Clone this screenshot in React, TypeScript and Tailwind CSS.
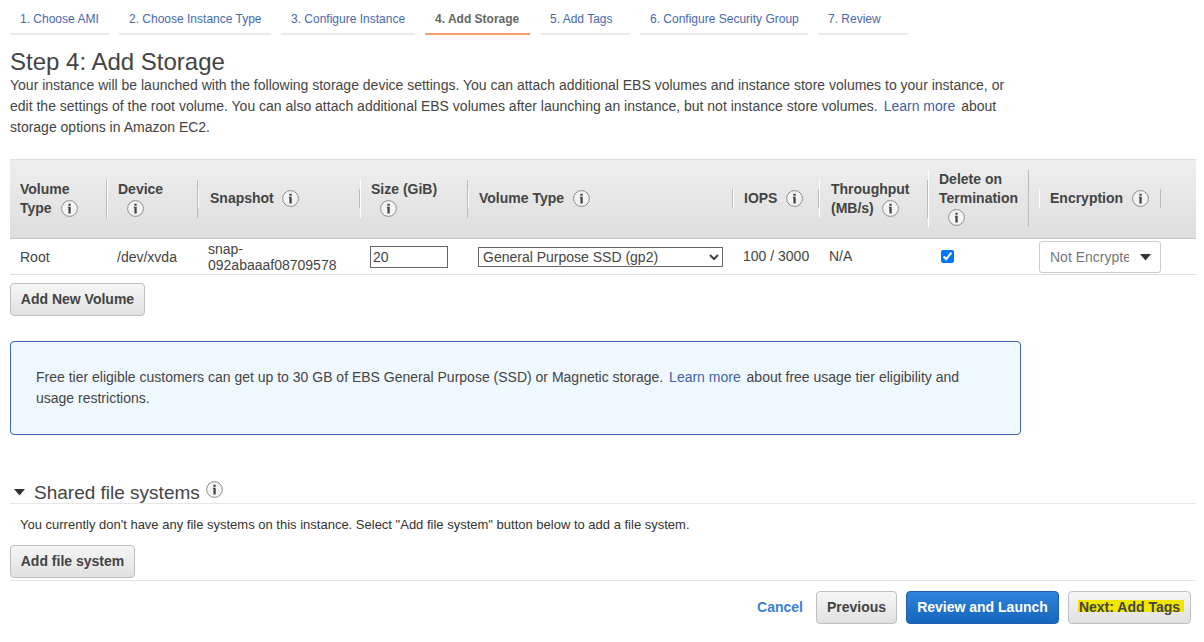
import { useState } from "react"
import type { ReactNode } from "react"

const STEPS = [
  { label: "1. Choose AMI", width: "w-[99px]" },
  { label: "2. Choose Instance Type", width: "w-[152px]" },
  { label: "3. Configure Instance", width: "w-[134px]" },
  { label: "4. Add Storage", width: "w-[105px]" },
  { label: "5. Add Tags", width: "w-[90px]" },
  { label: "6. Configure Security Group", width: "w-[168px]" },
  { label: "7. Review", width: "w-[90px]" },
]

// Each entry of `lines` is one row of the header label, the info icon follows the last one
const COLUMNS = [
  { lines: ["Volume", "Type"], className: "border-l-0 pl-2.5", iconClass: "ml-[9px]" },
  { lines: ["Device", ""], className: "pl-2.5", iconClass: "ml-[9px]" },
  { lines: ["Snapshot"], className: "mb-px pl-[11px]", iconClass: "ml-2" },
  { lines: ["Size (GiB)", ""], className: "pl-2.5", iconClass: "ml-[9px]" },
  { lines: ["Volume Type"], className: "mb-px pl-2.5", iconClass: "ml-[9px]" },
  { lines: ["IOPS"], className: "mb-px pl-2.5", iconClass: "ml-[9px]" },
  { lines: ["Throughput", "(MB/s)"], className: "pl-[11px]", iconClass: "ml-2" },
  { lines: ["Delete on", "Termination", ""], className: "mr-2.5 mb-0.5 pl-2.5", iconClass: "ml-[9px]" },
  { lines: ["Encryption"], className: "mb-px pl-2.5", iconClass: "ml-[9px]" },
]

const GRID = "grid grid-cols-[97px_91px_162px_108px_265px_86px_109px_111px_122px_35px] items-center"

function InfoIcon({ className = "" }: { className?: string }) {
  return (
    <svg className={`shrink-0 ${className}`} width="17" height="17" viewBox="0 0 17 17">
      <circle cx="8.5" cy="8.5" r="7.9" fill="#f4f4f4" stroke="#8c8c8c" />
      <path d="M7.4 3.8h2.3v2H7.4zM6.9 6.8h2.8v6.6H7.4V7.8h-.5z" fill="#444" />
    </svg>
  )
}

function Caret({ className = "" }: { className?: string }) {
  return (
    <svg className={`shrink-0 ${className}`} width="11" height="7" viewBox="0 0 11 7">
      <path d="M0 0h11L5.5 6.5z" fill="#333" />
    </svg>
  )
}

function GreyButton({ children, className = "" }: { children: ReactNode; className?: string }) {
  return (
    <button
      className={`flex h-[33px] items-center justify-center rounded-[4px] border border-[#bfbfbf] bg-linear-to-b from-[#f6f6f6] to-[#e1e1e1] pb-0.5 font-bold text-[#444] ${className}`}
    >
      {children}
    </button>
  )
}

function ColumnHeader({ lines, className, iconClass }: { lines: string[]; className: string; iconClass: string }) {
  return (
    <div className={`border-r border-l border-r-[#bbb] border-l-white leading-[19px] font-bold ${className}`}>
      {lines.map((line, i) => (
        <div key={i} className="flex h-[19px] items-center whitespace-nowrap">
          {line}
          {i === lines.length - 1 && <InfoIcon className={iconClass} />}
        </div>
      ))}
    </div>
  )
}

export default function App() {
  const [activeStep, setActiveStep] = useState(3)
  const [size, setSize] = useState("20")
  const [deleteOnTermination, setDeleteOnTermination] = useState(true)

  return (
    <div className="h-[642px] w-[1204px] overflow-hidden bg-white pr-2 pl-2.5 font-['Liberation_Sans',Arial,sans-serif] text-sm text-[#444]">
      {/* Wizard steps */}
      <nav className="flex gap-2.5 text-xs">
        {STEPS.map((step, i) => (
          <button
            key={step.label}
            onClick={() => setActiveStep(i)}
            className={`h-[35px] shrink-0 border-b-2 pt-1 pl-2.5 text-left whitespace-nowrap ${step.width} ${
              i === activeStep ? "border-[#f59b6f] font-bold text-[#666]" : "border-[#eaeaea] text-[#4769ad]"
            }`}
          >
            {step.label}
          </button>
        ))}
      </nav>

      <h1 className="mt-[13px] h-[27px] text-2xl leading-[28px]">Step 4: Add Storage</h1>
      <p className="w-[1010px] leading-[21px]">
        Your instance will be launched with the following storage device settings. You can attach additional EBS
        volumes and instance store volumes to your instance, or edit the settings of the root volume. You can also
        attach additional EBS volumes after launching an instance, but not instance store volumes.{" "}
        <a className="mr-0.5 ml-0.5 text-[#4062a8]">Learn more</a> about storage options in Amazon EC2.
      </p>

      {/* Volumes */}
      <div className="mt-[21px]">
        <div className={`h-20 border-t border-b border-t-[#dedede] border-b-[#c4c4c4] bg-linear-to-b from-[#eeeeee] to-[#dedede] ${GRID}`}>
          {COLUMNS.map((column, i) => (
            <ColumnHeader key={i} {...column} />
          ))}
        </div>
        <div className={`h-9 border-b border-[#dedede] ${GRID}`}>
          <div className="pl-2.5">Root</div>
          <div className="pl-2.5">/dev/xvda</div>
          <div className="pl-2.5 leading-4">
            snap-
            <br />
            092abaaaf08709578
          </div>
          <div className="pl-2.5">
            <input
              value={size}
              onChange={(e) => setSize(e.target.value)}
              className="block h-[22px] w-[78px] border border-[#666] bg-white px-0.5"
            />
          </div>
          <div className="pl-2.5">
            <select className="block h-5 w-[245px] border border-[#666] bg-white">
              <option>General Purpose SSD (gp2)</option>
            </select>
          </div>
          <div className="pb-0.5 pl-2.5">100 / 3000</div>
          <div className="pb-0.5 pl-2.5">N/A</div>
          <div className="pl-[13px]">
            <input
              type="checkbox"
              checked={deleteOnTermination}
              onChange={(e) => setDeleteOnTermination(e.target.checked)}
              className="block size-[13px]"
            />
          </div>
          <div className="flex h-8 items-center rounded-[3px] border border-[#ccc] bg-white pl-2.5 text-[#777]">
            <span className="w-[79px] overflow-hidden whitespace-nowrap">Not Encrypted</span>
            <Caret className="mt-0.5 ml-[11px]" />
          </div>
        </div>
      </div>
      <GreyButton className="mt-2 w-[135px]">Add New Volume</GreyButton>

      {/* Free tier notice */}
      <div className="mt-[25px] w-[1011px] rounded-[4px] border border-[#4166b0] bg-[#f0f8ff] p-[25px] leading-[21px]">
        Free tier eligible customers can get up to 30 GB of EBS General Purpose (SSD) or Magnetic storage.{" "}
        <a className="mr-0.5 ml-0.5 text-[#4062a8]">Learn more</a> about free usage tier eligibility and usage
        restrictions.
      </div>

      {/* Shared file systems */}
      <div className="mt-[45px] flex h-6 items-start border-b border-[#e6e6e6] pl-1">
        <Caret className="mt-[9px]" />
        <h2 className="mt-px ml-[9px] text-[19px] leading-6 whitespace-nowrap">Shared file systems</h2>
        <InfoIcon className="mt-[1px] ml-1.5" />
      </div>
      <p className="mt-[11px] pl-2.5 text-[13px] leading-5 text-[#333]">
        You currently don't have any file systems on this instance. Select "Add file system" button below to add a file
        system.
      </p>
      <GreyButton className="mt-2.5 w-[125px]">Add file system</GreyButton>

      <footer className="mt-0.5 flex items-center justify-end border-t border-[#e6e6e6] pt-2.5 pr-[5px]">
        <button className="mr-[13px] pb-0.5 font-bold text-[#3b80d8]">Cancel</button>
        <GreyButton className="w-[81px]">Previous</GreyButton>
        <button className="mx-[9px] h-[33px] w-[153px] rounded-[4px] border border-[#1c5fae] bg-linear-to-b from-[#2f83d9] to-[#1466be] pb-0.5 font-bold text-white">
          Review and Launch
        </button>
        <GreyButton className="w-[123px]">
          <span className="ml-[3px] bg-linear-to-b from-[#f0e600] to-[#f0e600] bg-[length:100%_12px] bg-[position:0_1px] bg-no-repeat pr-1 pl-px leading-4">
            Next: Add Tags
          </span>
        </GreyButton>
      </footer>
    </div>
  )
}
